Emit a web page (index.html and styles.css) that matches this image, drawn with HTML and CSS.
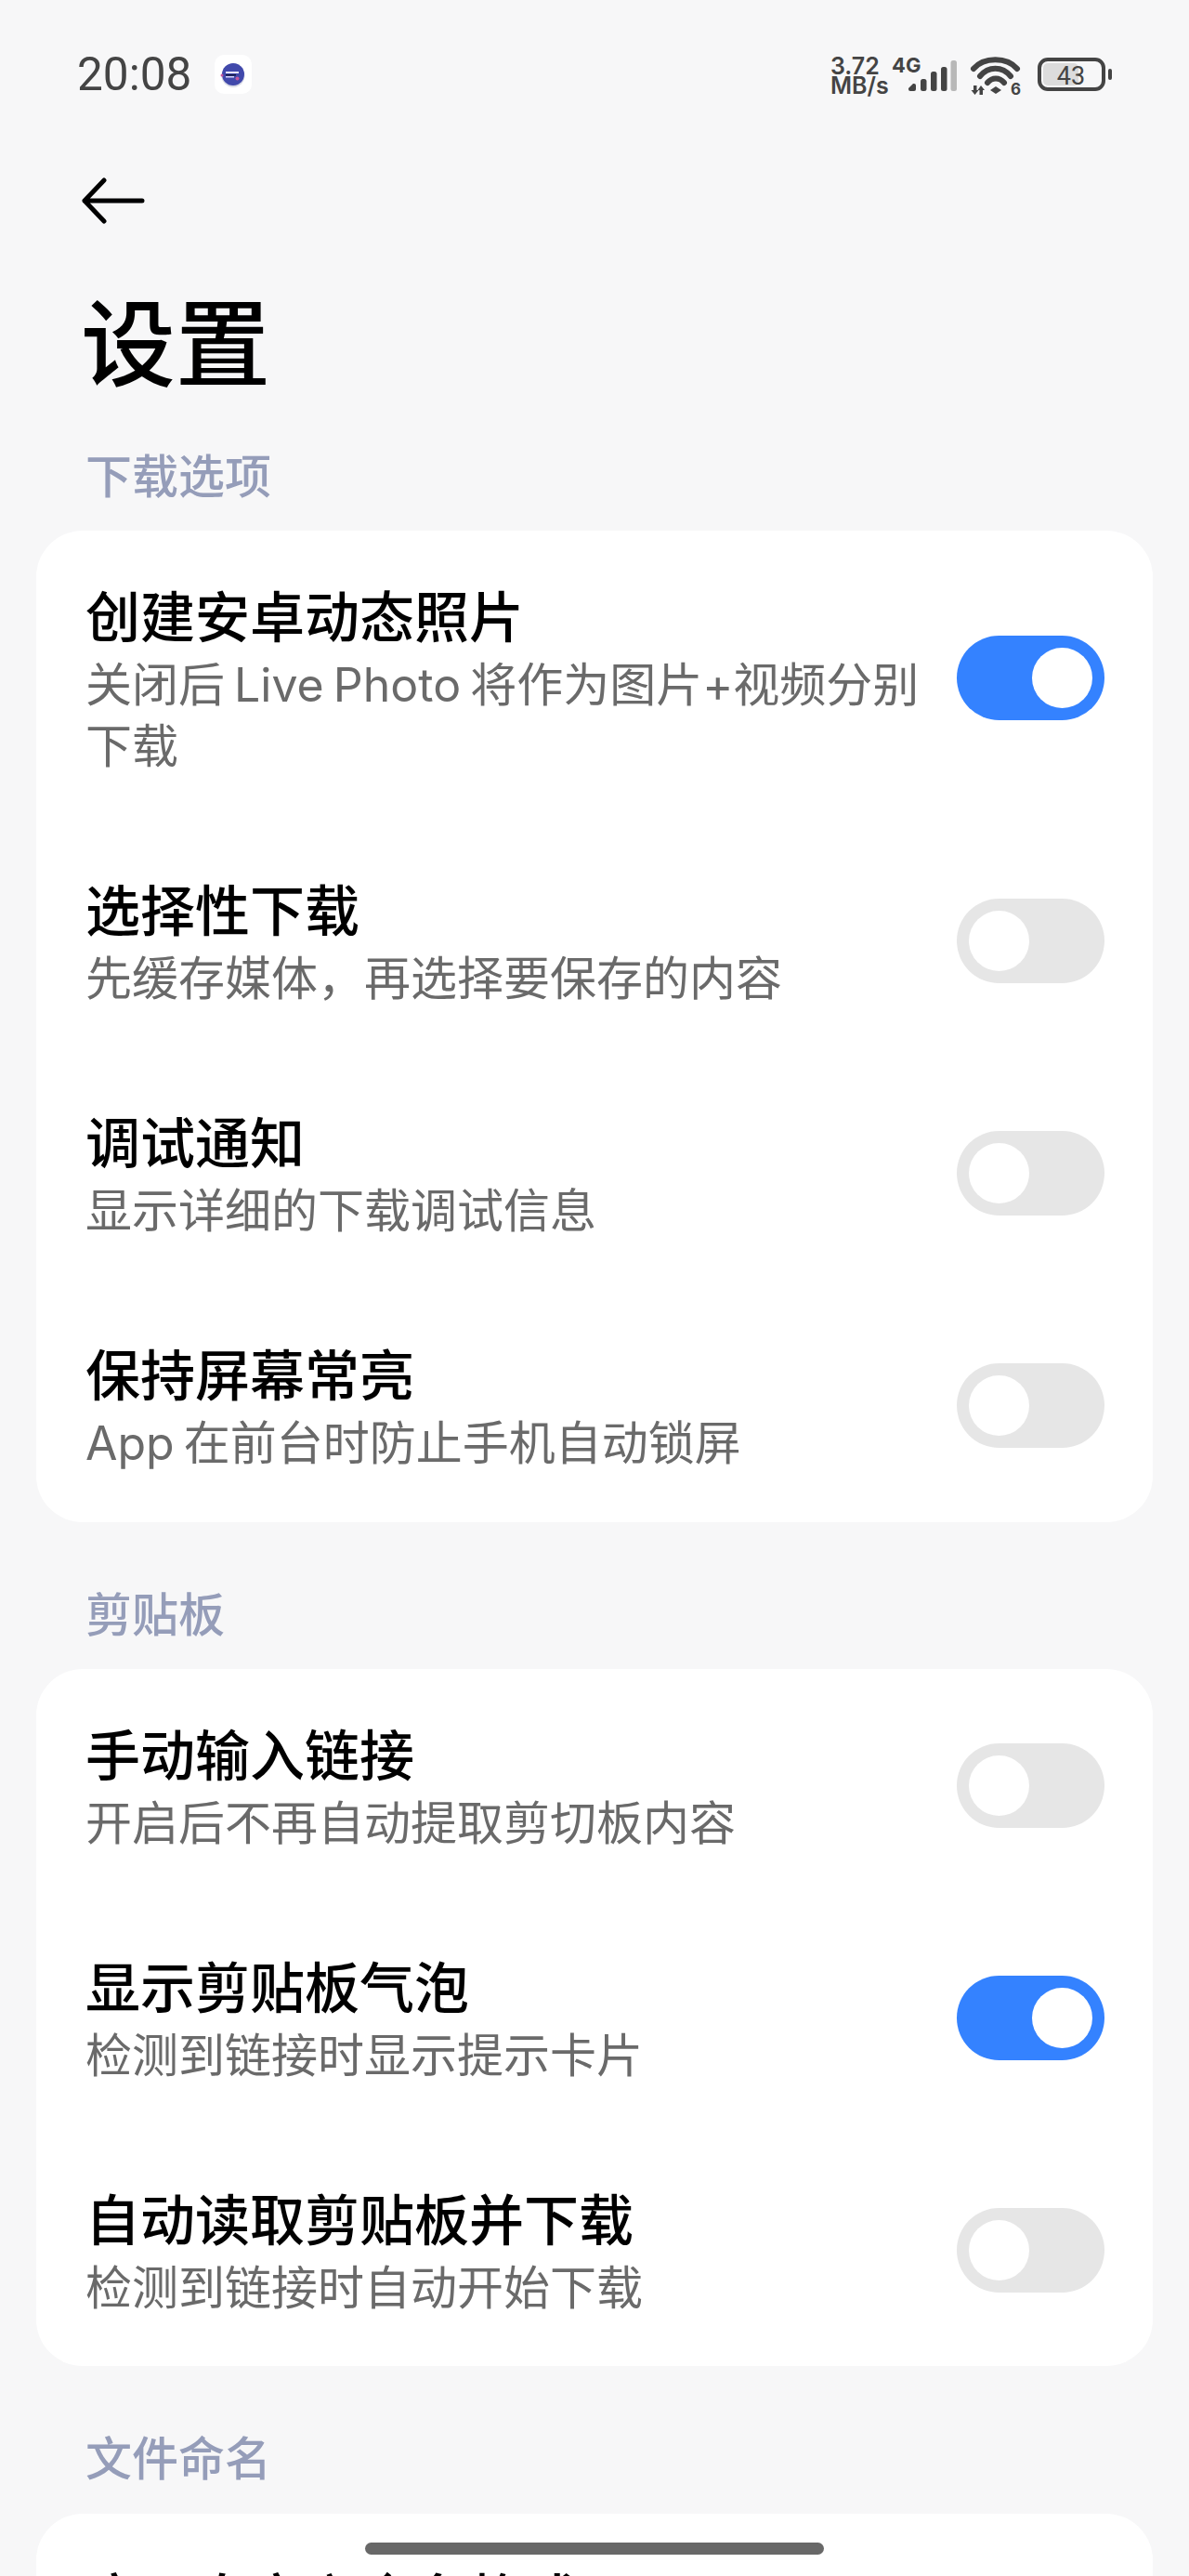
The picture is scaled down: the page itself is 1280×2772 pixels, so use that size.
FILE: index.html
```html
<!DOCTYPE html>
<html lang="zh-CN">
<head>
<meta charset="utf-8">
<title>设置</title>
<link rel="stylesheet" href="styles.css">
</head>
<body>
<div class="screen">
  <header class="status">
    <div class="status-left">
      <span class="time">20:08</span>
      <svg class="notif" viewBox="0 0 40 42" aria-hidden="true">
        <rect width="40" height="42" rx="10" fill="#ffffff"/>
        <ellipse cx="20" cy="22.5" rx="12.5" ry="12.5" fill="#d9dbe6"/>
        <ellipse cx="20" cy="21" rx="12" ry="12" fill="#4149ab"/>
        <rect x="12" y="18" width="14" height="2" fill="#e8e6ff"/>
        <rect x="12" y="21" width="11" height="1.5" fill="#15183f"/>
        <rect x="12" y="23" width="9" height="1.5" fill="#d9d6ff"/>
        <circle cx="24.500" cy="25.500" r="2" fill="#c4569c"/>
        <circle cx="8" cy="22" r="1.500" fill="#c4569c"/>
      </svg>
    </div>
    <div class="status-right">
      <div class="speed"><span>3.72</span><span>MB/s</span></div>
      <svg class="signal" viewBox="0 0 70 48" aria-hidden="true">
        <text class="sig-text" x="0" y="22">4G</text>
        <path d="M18 39 L23 34 H24 Q26 34 26 36 V40 Q26 42 24 42 H20 Q18 42 18 40 Z" fill="#444"/>
        <rect x="31" y="29" width="6.500" height="13" rx="2.500" fill="#444"/>
        <rect x="42" y="21" width="6.500" height="21" rx="2.500" fill="#444"/>
        <rect x="53" y="16" width="6.500" height="26" rx="2.500" fill="#444"/>
        <rect x="63.500" y="9" width="6.500" height="33" rx="2.500" fill="#b8b8b8"/>
      </svg>
      <svg class="wifi" viewBox="0 0 55 48" aria-hidden="true">
        <path d="M3 18 C14 5 39 5 50 18" fill="none" stroke="#444" stroke-width="6" stroke-linecap="round"/>
        <path d="M10 26 C19 15 34 15 43 26" fill="none" stroke="#444" stroke-width="6" stroke-linecap="round"/>
        <path d="M18 33 C23 27 31 27 36 33" fill="none" stroke="#444" stroke-width="6" stroke-linecap="round"/>
        <path d="M27 37 L33 41 L27 45 L21 41 Z" fill="#444"/>
        <path d="M3 36 H6.500 V41 H8.500 L4.500 46 L0.500 41 H3 Z" fill="#444"/>
        <path d="M9.500 46 H13 V41 H15 L11 36 L7.500 41 H9.500 Z" fill="#444"/>
        <text class="wifi-six" x="43" y="46">6</text>
      </svg>
      <svg class="battery" viewBox="0 0 80 36" aria-hidden="true">
        <rect x="2" y="2" width="69" height="32" rx="9" fill="none" stroke="#444" stroke-width="4"/>
        <rect x="6" y="6" width="38" height="24" rx="5" fill="#dcdcdc"/>
        <rect x="76" y="12" width="4" height="12" rx="2" fill="#444"/>
        <text class="bat-text" x="36" y="28.500" text-anchor="middle">43</text>
      </svg>
    </div>
  </header>

  <div class="toolbar">
    <svg class="back" viewBox="0 0 70 50" aria-hidden="true">
      <path d="M25 3 L4 25 L25 47 M4 25 H66" fill="none" stroke="#000" stroke-width="5" stroke-linecap="round" stroke-linejoin="round"/>
    </svg>
  </div>

  <h1 class="page-title">设置</h1>

  <h2 class="section-label first">下载选项</h2>
  <section class="card">
    <div class="row">
      <div class="text"><div class="row-title">创建安卓动态照片</div><div class="row-desc">关闭后 Live Photo 将作为图片+视频分别下载</div></div>
      <span class="toggle on"></span>
    </div>
    <div class="row">
      <div class="text"><div class="row-title">选择性下载</div><div class="row-desc">先缓存媒体，再选择要保存的内容</div></div>
      <span class="toggle"></span>
    </div>
    <div class="row">
      <div class="text"><div class="row-title">调试通知</div><div class="row-desc">显示详细的下载调试信息</div></div>
      <span class="toggle"></span>
    </div>
    <div class="row">
      <div class="text"><div class="row-title">保持屏幕常亮</div><div class="row-desc">App 在前台时防止手机自动锁屏</div></div>
      <span class="toggle"></span>
    </div>
  </section>

  <h2 class="section-label">剪贴板</h2>
  <section class="card">
    <div class="row">
      <div class="text"><div class="row-title">手动输入链接</div><div class="row-desc">开启后不再自动提取剪切板内容</div></div>
      <span class="toggle"></span>
    </div>
    <div class="row">
      <div class="text"><div class="row-title">显示剪贴板气泡</div><div class="row-desc">检测到链接时显示提示卡片</div></div>
      <span class="toggle on"></span>
    </div>
    <div class="row">
      <div class="text"><div class="row-title">自动读取剪贴板并下载</div><div class="row-desc">检测到链接时自动开始下载</div></div>
      <span class="toggle"></span>
    </div>
  </section>

  <h2 class="section-label">文件命名</h2>
  <section class="card">
    <div class="row">
      <div class="text"><div class="row-title">应用自定义命名格式</div></div>
    </div>
  </section>

  <div class="home-bar"></div>
</div>
</body>
</html>
```
FILE: styles.css
```css
* { box-sizing: border-box; }
html, body { margin: 0; padding: 0; }
body {
  background: #f7f7f8;
  font-family: Inter, "Noto Sans CJK SC", sans-serif;
  color: #000;
}
.screen {
  position: relative;
  width: 1280px;
  height: 2772px;
  overflow: hidden;
}
.status {
  height: 160px;
  display: flex;
  align-items: center;
  justify-content: space-between;
  padding: 0 83px 0 83px;
  color: #444;
}
.status-left { display: flex; align-items: center; gap: 25px; }
.time { font-family: Roboto, sans-serif; font-size: 49.500px; line-height: 56px; }
.notif { width: 40px; height: 42px; display: block; }
.status-right { display: flex; align-items: center; }
.speed {
  width: 61px;
  margin-top: 3px;
  margin-right: 5px;
  display: flex;
  flex-direction: column;
  font-family: Inter, Roboto, sans-serif;
  font-weight: 600;
  font-size: 25px;
  line-height: 21px;
  white-space: nowrap;
}
.signal { width: 70px; height: 48px; margin-right: 15px; display: block; overflow: visible; }
.wifi { width: 55px; height: 48px; margin-right: 17px; display: block; overflow: visible; }
.battery { width: 80px; height: 36px; display: block; }
.sig-text { font-family: Inter, Roboto, sans-serif; font-weight: 700; font-size: 22px; fill: #444; }
.wifi-six { font-family: Inter, Roboto, sans-serif; font-weight: 700; font-size: 17px; fill: #444; }
.bat-text { font-family: Roboto, sans-serif; font-size: 27px; fill: #444; }

.toolbar { height: 112px; padding-left: 87px; display: flex; align-items: center; }
.back { width: 70px; height: 50px; display: block; }

.page-title {
  margin: 29px 0 0;
  padding-left: 87px;
  font-size: 102px;
  line-height: 140px;
  font-weight: 500;
}
.section-label {
  margin: 65px 0 23.500px;
  padding-left: 92px;
  font-size: 50px;
  line-height: 70px;
  font-weight: 500;
  color: #959db9;
}
.section-label.first { margin-top: 37px; margin-bottom: 23px; }
.card {
  margin: 0 39px;
  background: #fff;
  border-radius: 50px;
}
.row {
  display: flex;
  align-items: center;
  gap: 20px;
  padding: 52.750px 52px 52.750px 53px;
}
.text { flex: 1; min-width: 0; margin-top: 1.750px; margin-bottom: -1.750px; }
.row-title { font-size: 59px; line-height: 78px; font-weight: 500; }
.row-desc { font-size: 50px; line-height: 66.500px; color: #6a6a6a; word-spacing: -4px; }
.toggle {
  position: relative;
  flex: none;
  width: 159px;
  height: 91px;
  border-radius: 46px;
  background: #e6e6e6;
}
.toggle::after {
  content: "";
  position: absolute;
  top: 13px;
  left: 13px;
  width: 65px;
  height: 65px;
  border-radius: 50%;
  background: #fff;
}
.toggle.on { background: #3482ff; }
.toggle.on::after { left: 81px; }
.home-bar {
  position: absolute;
  left: 393px;
  top: 2736px;
  width: 494px;
  height: 13px;
  border-radius: 7px;
  background: #686868;
}
```
